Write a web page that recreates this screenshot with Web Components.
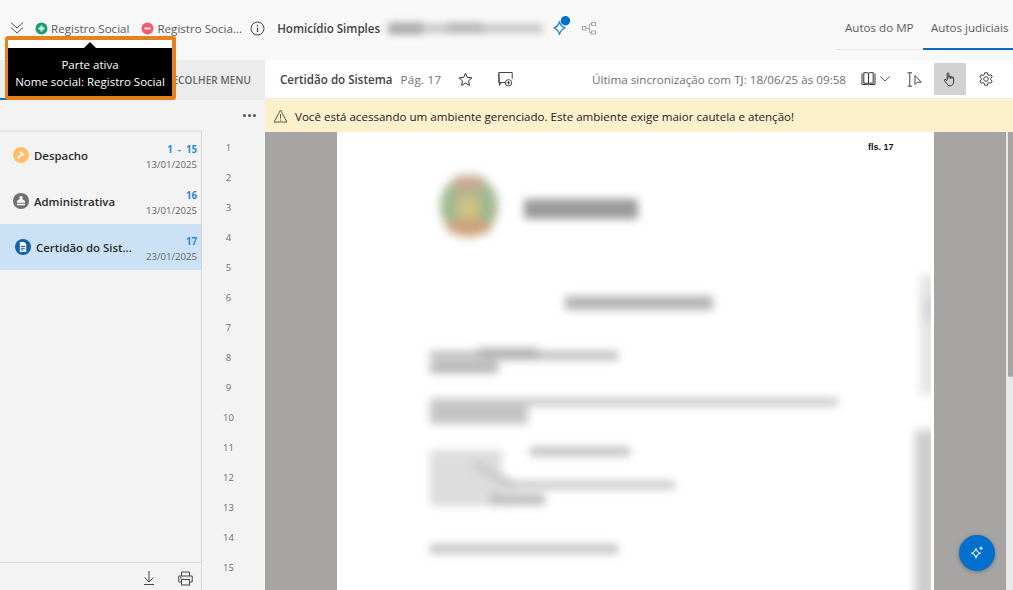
<!DOCTYPE html>
<html lang="pt-BR"><head><meta charset="utf-8"><title>Autos</title>
<style>
html,body{margin:0;padding:0;height:100%;overflow:hidden;background:#fff}
body{font-family:"Open Sans","Noto Sans",sans-serif;color:#323130}
</style></head><body>
<app-shell></app-shell>
<script>
function def(name,html){
  customElements.define(name,class extends HTMLElement{
    constructor(){super();const r=this.attachShadow({mode:'open'});
      r.innerHTML=typeof html==='function'?html(this):html;}
  });
}
const ic={
 chev:'<svg width="14" height="14" viewBox="0 0 14 14" fill="none" stroke="#555" stroke-width="1"><path d="M1 1.500l6 5.500 6-5.500M1 6.500l6 5.500 6-5.500"/></svg>',
 info:'<svg width="15" height="15" viewBox="0 0 15 15" fill="none" stroke="#444" stroke-width="1"><circle cx="7.500" cy="7.500" r="6.500"/><path d="M7.500 6.500v4.500M7.500 3.800v1.400" stroke-width="1.200"/></svg>',
 spark:'<svg width="24" height="24" viewBox="0 0 24 24" fill="none"><path d="M9.500 5.500c.8 3.700 2 5.300 5.700 6.500-3.700 1.200-4.900 2.800-5.700 6.500-.8-3.700-2-5.300-5.700-6.500 3.700-1.200 4.900-2.800 5.700-6.500z" stroke="#2b88d8" stroke-width="1.300" stroke-linejoin="round"/><circle cx="15.500" cy="4.800" r="4.700" fill="#0070cc"/></svg>',
 tree:'<svg width="14" height="13" viewBox="0 0 14 13" fill="none" stroke="#a9a9a9"><rect x=".5" y="4.500" width="3.500" height="3.500"/><rect x="9.500" y=".5" width="4" height="3"/><rect x="9.500" y="9" width="4" height="3"/><path d="M4 6.500h3.500M7.500 2v8.500M7.500 2h2M7.500 10.500h2"/></svg>',
 star:'<svg width="15" height="15" viewBox="0 0 15 15" fill="none" stroke="#333" stroke-width="1"><path d="M7.500 1.300l1.800 4.100 4.600.5-3.400 3 .9 4.500-3.900-2.300-3.900 2.300.9-4.500-3.400-3 4.600-.5z" stroke-linejoin="round"/></svg>',
 note:'<svg width="15" height="15" viewBox="0 0 15 15" fill="none" stroke="#444" stroke-width="1"><path d="M7 10.500H3.500L1.500 13.500 .8 1.200v-.7h13.400V6.800"/><path d="M.8 1.200V10.500h2.700" /><circle cx="10.500" cy="10.800" r="3.200"/><path d="M10.500 9v3.600M8.700 10.800h3.600"/></svg>',
 book:'<svg width="15" height="14" viewBox="0 0 15 14" fill="none" stroke="#333" stroke-width="1"><path d="M1 1.500v11h5.500c.5 0 1 .3 1 .8 0-.5.5-.8 1-.8H14v-11"/><path d="M2.800 1v10.200h3.700c.5 0 1 .2 1 .7V1.800C7.500 1 7 .7 6.300.7H2.800zM12.200 1v10.200H8.500c-.5 0-1 .2-1 .7V1.800C7.500 1 8 .7 8.700.7h3.500z"/></svg>',
 down:'<svg width="10" height="6" viewBox="0 0 10 6" fill="none" stroke="#555"><path d="M.5.500L5 5 9.500.500"/></svg>',
 cursor:'<svg width="15" height="15" viewBox="0 0 15 15" fill="none" stroke="#444" stroke-width="1"><path d="M.5.800h4.500M.5 14.200h4.500M2.800.8v13.400"/><path d="M8 3.500v9l2.300-2.300h4z" stroke-linejoin="round"/></svg>',
 hand:'<svg width="14" height="15" viewBox="0 0 14 15" fill="none" stroke="#333" stroke-width="1" stroke-linejoin="round"><path d="M4.200 8V1.800c0-1.200 1.700-1.200 1.700 0V6.500m0-1.800c0-1 1.600-1 1.600 0v2m0-1.500c0-1 1.500-1 1.500 0v1.500m0-.8c0-1 1.600-1 1.600 0v4.200c0 2.400-1.400 3.600-3.200 3.600H6.700c-1.400 0-2.100-.7-2.800-1.900L1.500 8.700c-.6-1 .5-1.800 1.400-1.100L4.200 9"/></svg>',
 gear:'<svg width="16" height="16" viewBox="0 0 16 16" fill="none" stroke="#444" stroke-width="1"><path d="M6.700 1h2.600l.4 1.900 1.300.7 1.900-.6 1.300 2.200-1.500 1.300v1.500l1.500 1.300-1.300 2.200-1.900-.6-1.300.7-.4 1.900H6.700l-.4-1.900-1.300-.7-1.900.6-1.300-2.200 1.500-1.300V6.500L1.800 5.200 3.100 3l1.900.6 1.300-.7z" stroke-linejoin="round" transform="translate(0 .75)"/><circle cx="8" cy="8" r="2.300"/></svg>',
 warn:'<svg width="15" height="14" viewBox="0 0 15 14" fill="none" stroke="#5e5a45" stroke-width="1"><path d="M7.500 1L14 13H1z" stroke-linejoin="round"/><path d="M7.500 5v4.500M7.500 10.500v1.200"/></svg>',
 dl:'<svg width="14" height="16" viewBox="0 0 14 16" fill="none" stroke="#444" stroke-width="1"><path d="M7 1v10.500M2.500 7.500L7 12l4.500-4.500M2 14.500h10"/></svg>',
 print:'<svg width="15" height="15" viewBox="0 0 15 15" fill="none" stroke="#444" stroke-width="1"><path d="M3.500 5V1h8v4M3.500 11H.8V5h13.400v6h-2.700"/><rect x="3.500" y="8.500" width="8" height="5.500"/><path d="M2 7h1.500"/></svg>',
 fab:'<svg width="16" height="16" viewBox="0 0 16 16" fill="none" stroke="#fff"><path d="M7 3.500c.7 3 1.800 4 4.500 4.700-2.700.7-3.800 1.800-4.500 4.800-.7-3-1.800-4.100-4.500-4.800C5.200 7.500 6.300 6.500 7 3.500z" stroke-width="1.100" stroke-linejoin="round"/><path d="M12 1.500v3.500M10.300 3.200h3.400" stroke-width="1"/></svg>',
 gavel:'<svg width="16" height="16" viewBox="0 0 16 16"><circle cx="8" cy="8" r="8" fill="#ffc06b"/><path d="M7.500 3.800l4 4-1.500 1.500-1-1-3.700 3.700-1.300-1.300L8.200 7 7 5.800z" fill="#fff"/></svg>',
 stamp:'<svg width="16" height="16" viewBox="0 0 16 16"><circle cx="8" cy="8" r="8" fill="#6f6f6f"/><path d="M6.500 3.300h3v3l2.500 1.700v1.700H4V8l2.500-1.700zM4 10.800h8v1.400H4z" fill="#fff"/></svg>',
 doc:'<svg width="16" height="16" viewBox="0 0 16 16"><circle cx="8" cy="8" r="8" fill="#0f62ae"/><path d="M4.800 3h4.400l2 2v8H4.800z" fill="#fff"/><path d="M6 7.500h4M6 9.300h4M6 11h2.500" stroke="#0f62ae"/></svg>',
 plus:'<svg width="13" height="13" viewBox="0 0 13 13"><circle cx="6.500" cy="6.500" r="6" fill="#11a26d"/><path d="M3.500 6.500h6M6.500 3.500v6" stroke="#fff" stroke-width="1.800"/></svg>',
 minus:'<svg width="13" height="13" viewBox="0 0 13 13"><circle cx="6.500" cy="6.500" r="6" fill="#f25c6e"/><path d="M3.500 6.500h6" stroke="#fff" stroke-width="1.800"/></svg>'
};

def('party-chip',h=>`<style>:host{display:inline-flex;align-items:center;gap:3px;font-size:11.600px;color:#5c5c5c;white-space:nowrap}svg{display:block}</style>${ic[h.getAttribute('icon')]}<slot></slot>`);
def('icon-btn',h=>`<style>:host{display:inline-flex;align-items:center;justify-content:center;width:32px;height:32px}:host([on]){background:#d2d2d2}svg{display:block}</style>${ic[h.getAttribute('icon')]}`);

def('top-bar',`<style>
:host{display:flex;height:60px;background:#f8f8f8;box-sizing:border-box;padding-left:10px;flex:none}
.l{display:flex;align-items:center;flex:1;padding-bottom:4px;min-width:0}
svg{display:block}
.t{font-size:11.600px;font-weight:600;color:#444;margin-left:12px;white-space:nowrap}
.tabs{display:flex;height:50px;align-self:flex-start;margin-left:auto;flex:none}
.tab{padding-top:20px;box-sizing:border-box;height:50px;font-size:11.600px;color:#5c5c5c;border-bottom:1px solid #e6e6e6;width:87px;padding-left:9px;white-space:nowrap}
.tab.on{border-bottom:2px solid #0f6cbd;width:90px;padding-left:8px;overflow:hidden}
</style>
<div class="l">${ic.chev}<party-chip icon="plus" style="margin-left:11px">Registro Social</party-chip><party-chip icon="minus" style="margin-left:12px">Registro Socia...</party-chip><span style="margin-left:8px">${ic.info}</span><span class="t">Homicídio Simples</span>
<svg width="168" height="28" viewBox="0 0 168 28" style="margin-left:1px;flex:none"><defs><filter id="b" x="-10%" y="-60%" width="120%" height="220%"><feGaussianBlur stdDeviation="3"/></filter></defs><g filter="url(#b)"><rect x="6" y="9" width="156" height="11" fill="#cfcfcf"/><rect x="8" y="8" width="34" height="13" fill="#b2b2b2"/><rect x="66" y="8" width="36" height="12" fill="#bebebe"/></g></svg>
<span style="margin-left:1px">${ic.spark}</span><span style="margin-left:8px">${ic.tree}</span></div>
<div class="tabs"><div class="tab">Autos do MP</div><div class="tab on">Autos judiciais</div></div>`);

def('doc-item',h=>`<style>
:host{display:flex;height:46px;align-items:center;box-sizing:border-box;padding-left:13px;padding-right:4px}
:host([on]){background:#cbe2f6;padding-left:15px}
svg{display:block;flex:none}
.n{font-size:11.400px;font-weight:600;color:#2a2a2a;margin-left:5px;flex:1;white-space:nowrap}
.r{text-align:right;line-height:15px;padding-top:3px}
.p{font-size:9.700px;font-weight:700;color:#2b88d8;white-space:pre}
.d{font-size:9.600px;color:#666}
</style>${ic[h.getAttribute('icon')]}<span class="n"><slot></slot></span><div class="r"><div class="p">${h.getAttribute('pages')}</div><div class="d">${h.getAttribute('date')}</div></div>`);

def('side-panel',`<style>
:host{display:flex;flex-direction:column;width:265px;flex:none;background:#f3f3f3;overflow:hidden}
.h{height:40px;background:linear-gradient(#0f6cbd,#0f6cbd) 0 100%/170px 2px no-repeat #ececec;font-size:10px;font-weight:600;color:#666;letter-spacing:.1px;display:flex;align-items:center;justify-content:flex-end;padding-right:14px;flex:none;box-sizing:border-box}
.dots{height:30px;display:flex;align-items:center;justify-content:flex-end;padding-right:9px;flex:none}
.dots i{display:block;width:3px;height:3px;border-radius:50%;background:#555;margin-left:2px}
.cols{flex:1;display:flex;min-height:0}
.list{flex:none;display:flex;flex-direction:column;border-top:2px solid #e7e7e7;border-right:1px solid #d8d8d8;box-sizing:border-box;width:202px}
.items{flex:1}
.foot{height:28px;border-top:1px solid #d8d8d8;display:flex;align-items:center;justify-content:flex-end;gap:22px;padding-right:8px;padding-top:3px;flex:none;box-sizing:border-box}
.foot svg{display:block}
.nums{flex:1;display:grid;grid-auto-rows:30px;justify-items:center;font-size:9.500px;color:#707070;padding-top:3px;padding-right:10px;align-content:start;line-height:30px}
</style>
<div class="h">RECOLHER MENU</div>
<div class="dots"><i></i><i></i><i></i></div>
<div class="cols"><div class="list"><div class="items">
<doc-item icon="gavel" pages="1  -  15" date="13/01/2025">Despacho</doc-item>
<doc-item icon="stamp" pages="16" date="13/01/2025">Administrativa</doc-item>
<doc-item icon="doc" pages="17" date="23/01/2025" on>Certidão do Sist...</doc-item>
</div><div class="foot">${ic.dl}${ic.print}</div></div>
<div class="nums">${Array.from({length:15},(_,i)=>`<span>${i+1}</span>`).join('')}</div></div>`);

def('view-toolbar',`<style>
:host{display:flex;height:39px;align-items:center;background:#fff;font-size:11.600px;flex:none;box-sizing:border-box;padding-left:15px;padding-right:11px;border-bottom:1px solid #eee;white-space:nowrap}
b{font-weight:600;color:#444}
.pg{color:#6b7076;margin-left:8px;letter-spacing:.25px}
svg{display:block}
.st{margin-left:17px}.nt{margin-left:25px}
.sync{margin-left:auto;color:#6b7076;margin-right:15px;font-size:11.650px}
.bk{display:flex;align-items:center;gap:4px}
icon-btn{flex:none}
</style><b>Certidão do Sistema</b><span class="pg">Pág. 17</span><span class="st">${ic.star}</span><span class="nt">${ic.note}</span>
<span class="sync">Última sincronização com TJ: 18/06/25 às 09:58</span><span class="bk">${ic.book}${ic.down}</span><icon-btn icon="cursor" style="margin-left:8px"></icon-btn><icon-btn icon="hand" on style="margin-left:4px"></icon-btn><icon-btn icon="gear" style="margin-left:4px"></icon-btn>`);

def('warn-bar',`<style>:host{display:flex;align-items:center;height:33px;box-sizing:border-box;background:#fdf0cd;font-size:11.570px;color:#222;padding-left:8px;padding-top:1px;gap:7px;white-space:nowrap;flex:none}svg{display:block}</style>${ic.warn}<slot></slot>`);

def('doc-page',`<style>
:host{display:block;position:relative;width:597px;height:100%;background:#fff;flex:none;overflow:hidden}
.fls{position:absolute;left:531px;top:10px;font:700 9px "Liberation Sans",sans-serif;color:#111}
svg{display:block}
</style><div class="fls">fls. 17</div>
<svg width="597" height="458" viewBox="337 132 597 458">
<defs>
<filter id="b3" x="-30%" y="-200%" width="160%" height="500%"><feGaussianBlur stdDeviation="4"/></filter>
<filter id="b5" x="-40%" y="-40%" width="180%" height="180%"><feGaussianBlur stdDeviation="5"/></filter>
<clipPath id="c"><rect x="337" y="132" width="594" height="458"/></clipPath>
</defs>
<g filter="url(#b5)">
<ellipse cx="469" cy="206" rx="29" ry="31" fill="#a2b890"/>
<rect x="455" y="176" width="28" height="14" fill="#c9a890"/>
<rect x="458" y="197" width="20" height="22" fill="#d0c280"/>
<ellipse cx="469" cy="227" rx="23" ry="9" fill="#cca27e"/>
</g>
<g filter="url(#b3)">
<rect x="524" y="199" width="114" height="20" fill="#9a9a9a"/>
<rect x="565" y="296" width="148" height="14" fill="#b4b4b4"/>
<rect x="430" y="351" width="188" height="9" fill="#bebebe"/><rect x="478" y="348" width="60" height="12" fill="#b0b0b0"/>
<rect x="430" y="362" width="68" height="11" fill="#b4b4b4"/>
<rect x="430" y="398" width="408" height="8" fill="#c8c8c8"/>
<rect x="430" y="404" width="98" height="20" fill="#c4c4c4"/>
<rect x="530" y="447" width="100" height="9" fill="#bfbfbf"/>
<rect x="430" y="450" width="72" height="56" fill="#dddddd"/>
<rect x="474" y="470" width="48" height="10" fill="#cccccc" transform="rotate(30 495 470)"/>
<rect x="500" y="481" width="175" height="8" fill="#c6c6c6"/>
<rect x="490" y="494" width="55" height="11" fill="#bcbcbc"/>
<rect x="430" y="544" width="188" height="10" fill="#c4c4c4"/>
</g>
<g clip-path="url(#c)"><g filter="url(#b5)">
<rect x="920" y="275" width="16" height="120" fill="#e4e4e4"/><rect x="923" y="298" width="14" height="24" fill="#d4d4dc"/>
<rect x="915" y="430" width="22" height="170" fill="#cdcdcd"/>
</g></g>
</svg>`);

def('doc-view',`<style>
:host{display:flex;flex:1;min-height:0;background:#a6a5a3;position:relative;overflow:hidden}
.wrap{flex:1;display:flex;padding-left:72px;min-width:0}
.sb{width:7px;flex:none;background:#e8e8e8}
.sb i{display:block;height:245px;margin-left:2px;background:#a6a5a3;border-radius:0 0 2px 2px}
.fab{position:absolute;right:18px;bottom:19px;width:36px;height:36px;border-radius:50%;background:#0070cc;display:flex;align-items:center;justify-content:center;box-shadow:0 1px 4px rgba(0,0,0,.3)}
svg{display:block}
</style><div class="wrap"><doc-page></doc-page></div><div class="sb"><i></i></div><div class="fab">${ic.fab}</div>`);

def('party-tooltip',`<style>
:host{position:absolute;left:5px;top:36px;width:171px;height:64px;box-sizing:border-box;border:solid #e8801c;border-width:4px 4px 4px 3px;border-radius:3px;background:#fff;font-size:11.500px;color:#fff;text-align:center;display:block;z-index:5}
.bk{position:absolute;left:0;right:0;top:8px;bottom:0;background:#000;line-height:17px;padding-top:8px;white-space:nowrap}
.ar{position:absolute;left:76px;top:2px;border:6px solid transparent;border-top:0;border-bottom:6px solid #000;width:0;height:0}
</style><div class="ar"></div><div class="bk">Parte ativa<br>Nome social: Registro Social</div>`);

def('app-shell',`<style>
:host{display:flex;flex-direction:column;width:1013px;height:590px;position:relative;overflow:hidden;background:#fff}
.body{flex:1;display:flex;min-height:0}
.main{flex:1;display:flex;flex-direction:column;min-width:0}
</style><top-bar></top-bar><div class="body"><side-panel></side-panel><div class="main"><view-toolbar></view-toolbar><warn-bar>Você está acessando um ambiente gerenciado. Este ambiente exige maior cautela e atenção!</warn-bar><doc-view></doc-view></div></div><party-tooltip></party-tooltip>`);
</script></body></html>
